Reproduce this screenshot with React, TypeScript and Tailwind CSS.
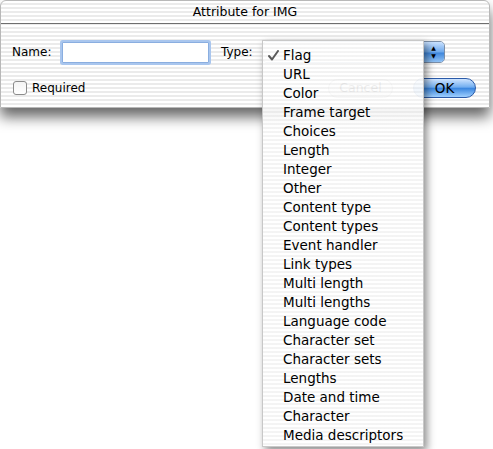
import React from "react";

const items = [
  "Flag","URL","Color","Frame target","Choices","Length","Integer","Other",
  "Content type","Content types","Event handler","Link types","Multi length",
  "Multi lengths","Language code","Character set","Character sets","Lengths",
  "Date and time","Character","Media descriptors",
];

const stripes = "bg-[repeating-linear-gradient(180deg,#ffffff_0px,#ffffff_2px,#ebebeb_2px,#ebebeb_4px)]";

export default function App() {
  return (
    <div
      className="relative w-[493px] h-[449px] bg-white overflow-hidden"
      style={{ fontFamily: '"DejaVu Sans", "Liberation Sans", sans-serif' }}
    >
      {/* Window */}
      <div className={`w-[490px] h-[108px] rounded-t-[6px] border border-[#b8b8b8] ${stripes} shadow-[0_9px_14px_rgba(0,0,0,0.6)] flex flex-col`}>
        <div className="h-[23px] border-b border-[#6e6e6e] flex items-center justify-center text-[12.5px] text-black">
          Attribute for IMG
        </div>
        <div className="flex flex-col pt-[17px] pl-[11px] text-[12px] text-black">
          <div className="flex items-center h-[22px]">
            <span className="w-[50px]">Name:</span>
            <div className="w-[147px] h-[21px] bg-white border border-[#8aaee0] shadow-[0_0_0_2px_#a9c6ee] rounded-[1px]" />
            <span className="ml-[12px] w-[41px]">Type:</span>
            <div className="w-[183px] h-[22px] flex rounded-[5px] border border-[#7a8ea8] overflow-hidden">
              <div className="flex-1 bg-white" />
              <div className="w-[21px] bg-[linear-gradient(180deg,#c9e1ff_0%,#6ea9ec_50%,#3f87dc_55%,#8fc1f5_100%)] flex flex-col items-center justify-center gap-[2px] text-[6px] leading-none text-black">
                <span>▲</span>
                <span>▼</span>
              </div>
            </div>
          </div>
          <div className="flex items-center mt-[15px] h-[20px]">
            <div className="w-[14px] h-[14px] ml-[1px] rounded-[3px] border border-[#8c8c8c] bg-[linear-gradient(180deg,#f4f4f4,#ffffff)]" />
            <span className="ml-[5px] w-[296px]">Required</span>
            <div className="w-[65px] h-[19px] rounded-full border border-[#9a9a9a] bg-[linear-gradient(180deg,#ffffff,#dcdcdc)] flex items-center justify-center text-[12.5px]">
              Cancel
            </div>
            <div className="ml-[20px] w-[63px] h-[20px] rounded-full border border-[#2a5aa8] bg-[linear-gradient(180deg,#cfe4ff_0%,#72aef0_45%,#3b86df_52%,#9fd0ff_100%)] flex items-center justify-center text-[13.5px]">
              OK
            </div>
          </div>
        </div>
      </div>

      {/* Popup menu */}
      <div className="absolute left-[262px] top-[40px] w-[162px] h-[407px] bg-[repeating-linear-gradient(180deg,rgba(255,255,255,0.93)_0px,rgba(255,255,255,0.93)_2px,rgba(243,243,243,0.93)_2px,rgba(243,243,243,0.93)_4px)] border border-[#c8c8c8] shadow-[3px_4px_8px_rgba(0,0,0,0.45)] pt-[5px]">
        {items.map((t, i) => (
          <div key={t} className="relative h-[19px] flex items-center pl-[20px] text-[13.5px] text-black">
            {i === 0 && (
              <svg className="absolute left-[5px] top-[4px]" width="11" height="11" viewBox="0 0 11 11">
                <path d="M1 6 L4 9.5 L10 1" fill="none" stroke="#5a5a5a" strokeWidth="2" strokeLinecap="round" strokeLinejoin="round" />
              </svg>
            )}
            {t}
          </div>
        ))}
      </div>
    </div>
  );
}
